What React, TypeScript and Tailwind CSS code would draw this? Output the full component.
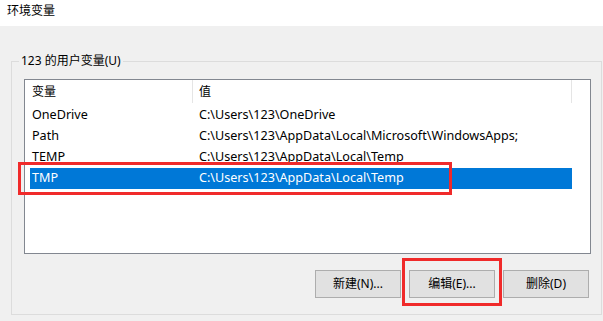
const rows = [
  { name: 'OneDrive', value: 'C:\\Users\\123\\OneDrive' },
  { name: 'Path', value: 'C:\\Users\\123\\AppData\\Local\\Microsoft\\WindowsApps;' },
  { name: 'TEMP', value: 'C:\\Users\\123\\AppData\\Local\\Temp' },
  { name: 'TMP', value: 'C:\\Users\\123\\AppData\\Local\\Temp', selected: true },
];

const font = "font-['Noto_Sans','Noto_Sans_CJK_SC',sans-serif]";

function Button({ label }: { label: string }) {
  return (
    <button className="flex h-[28px] w-[86px] items-center justify-center border border-[#adadad] bg-[#e1e1e1] text-[12px] text-black">
      {label}
    </button>
  );
}

export default function App() {
  return (
    <div className={`relative h-[321px] w-[603px] overflow-hidden bg-[#f0f0f0] ${font} text-black`}>
      {/* title bar */}
      <div className="flex h-[26px] items-start justify-between bg-white">
        <span className="ml-[7px] mt-[2px] text-[12px] leading-[18px]">环境变量</span>
        <svg width="10" height="10" viewBox="0 0 10 10" className="mr-[-10px] mt-[5px] shrink-0">
          <path d="M0 0L10 10M10 0L0 10" stroke="#000" strokeWidth="1" />
        </svg>
      </div>

      <fieldset className="ml-[11px] mt-[27px] h-[262px] w-[591px] border border-[#dcdcdc] p-0">
        <legend className="ml-[7px] px-[2px] text-[12px] leading-[16px]">123 的用户变量(U)</legend>

        <div className="ml-[12px] mt-[10px] h-[175px] w-[567px] border border-[#828790] bg-white">
          {/* header */}
          <div className="flex h-[23px] items-center text-[12px]">
            <div className="flex h-full w-[168px] items-center border-r border-[#e5e5e5] pl-[7px]">变量</div>
            <div className="flex h-full w-[379px] items-center border-r border-[#e5e5e5] pl-[6px]">值</div>
          </div>
          <div className="mt-[2px]">
            {rows.map((r) => (
              <div
                key={r.name}
                className={`ml-[5px] flex h-[21px] w-[542px] items-center text-[12.6px] ${
                  r.selected ? 'bg-[#0078d7] text-white' : ''
                }`}
              >
                <div className="w-[163px] pl-[2px]">{r.name}</div>
                <div className="pl-[6px]">{r.value}</div>
              </div>
            ))}
          </div>
        </div>

        <div className="ml-[303px] mt-[16px] flex gap-[8px]">
          <Button label="新建(N)..." />
          <Button label="编辑(E)..." />
          <Button label="删除(D)" />
        </div>
      </fieldset>

      {/* highlight annotations */}
      <div className="absolute left-[18px] top-[162px] h-[33px] w-[434px] border-[3px] border-[#f02a2a]" />
      <div className="absolute left-[402px] top-[258px] h-[48px] w-[100px] border-[3px] border-[#f02a2a]" />
    </div>
  );
}
